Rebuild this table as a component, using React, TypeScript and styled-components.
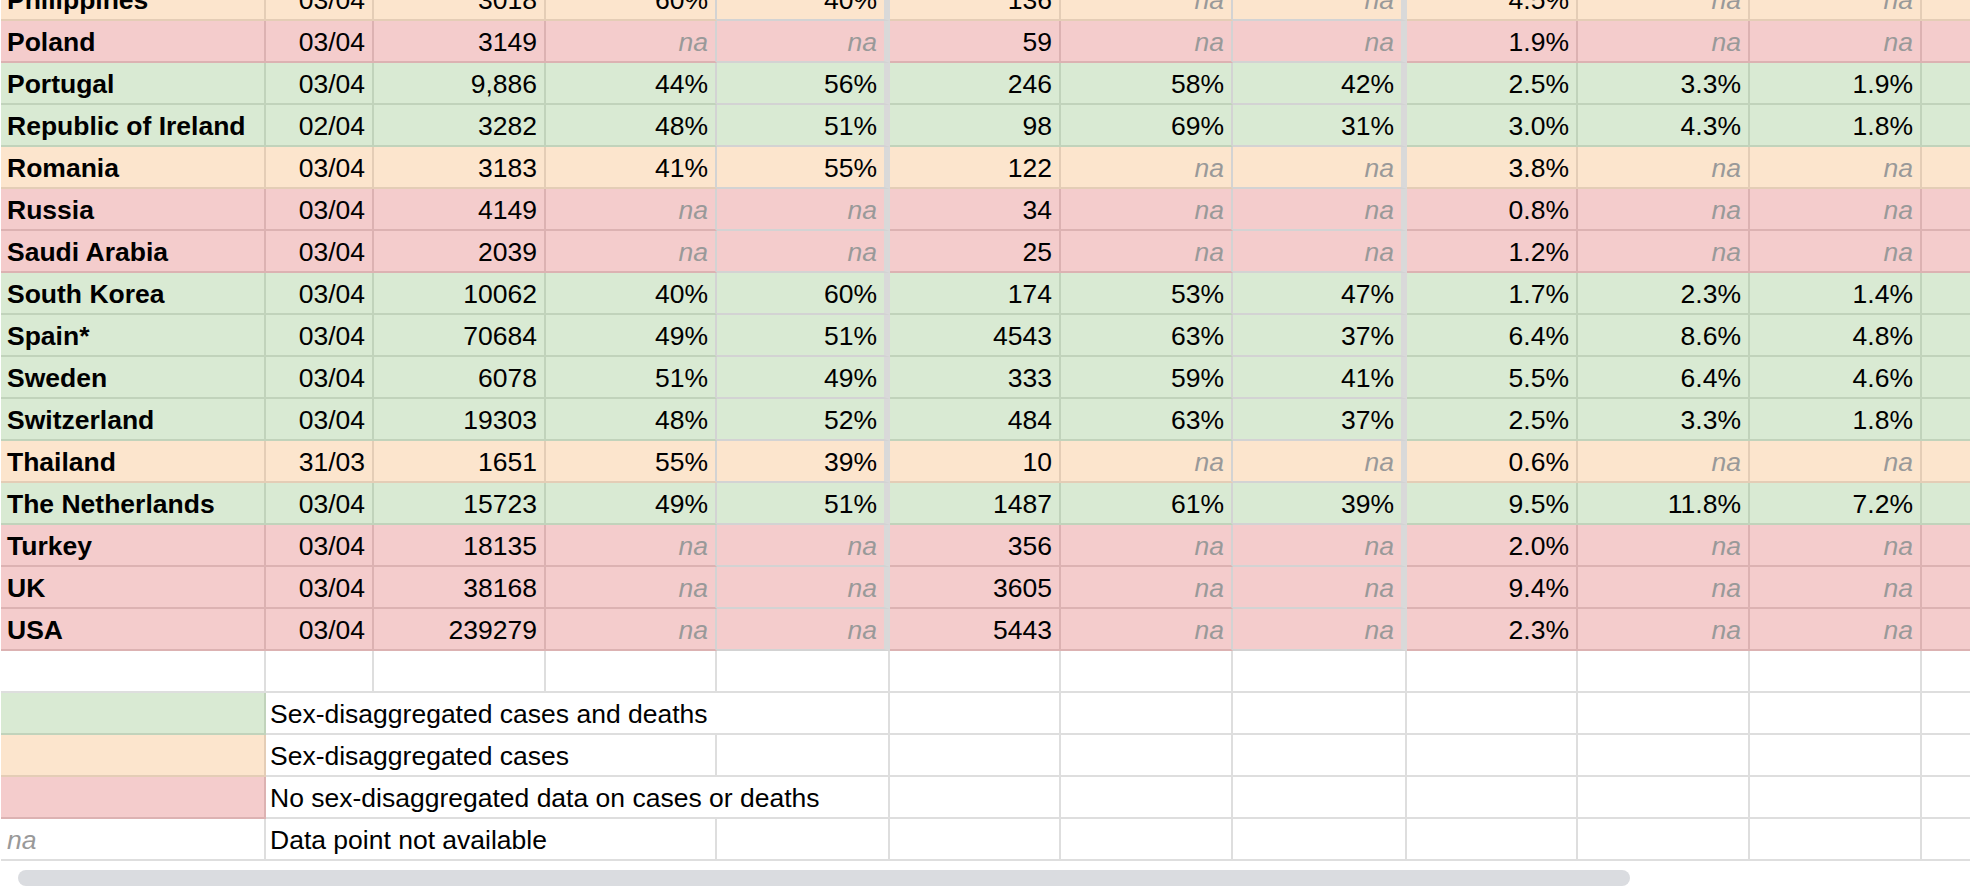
import React from "react";
import styled, { createGlobalStyle } from "styled-components";

const GlobalStyle = createGlobalStyle`
  html, body {
    margin: 0;
    padding: 0;
    background: #ffffff;
  }
  body {
    font-family: "Liberation Sans", Arial, sans-serif;
  }
`;

type Tone = "green" | "orange" | "pink" | "white";

const COLUMN_WIDTHS = [265, 108, 172, 171, 173, 171, 172, 174, 171, 172, 172, 48];
const COLS = COLUMN_WIDTHS.map((w) => `${w}px`).join(" ");

const FILL: Record<Tone, string> = {
  green: "#d9ead3",
  orange: "#fce5cd",
  pink: "#f4cccc",
  white: "#ffffff",
};

const LINE: Record<Tone, string> = {
  green: "#c1d3bb",
  orange: "#e4cdb6",
  pink: "#dcb2b2",
  white: "#dedede",
};

const BOX_LINE = "#d3d3d3";
const BAND = "#d9d9d9";

const Page = styled.div`
  width: 1976px;
  height: 890px;
  overflow: hidden;
  background: #ffffff;
`;

const Sheet = styled.div`
  display: flex;
  flex-direction: column;
  padding-left: 1px;
`;

const Row = styled.div<{ $h: number }>`
  display: grid;
  grid-template-columns: ${COLS};
  height: ${(p) => p.$h}px;
`;

const Cell = styled.div<{
  $tone: Tone;
  $right?: boolean;
  $rw: number;
  $rc: string;
  $bc: string;
  $span?: number;
}>`
  box-sizing: border-box;
  display: flex;
  align-items: flex-end;
  justify-content: ${(p) => (p.$right ? "flex-end" : "flex-start")};
  grid-column: span ${(p) => p.$span ?? 1};
  min-width: 0;
  overflow: hidden;
  white-space: nowrap;
  background: ${(p) => FILL[p.$tone]};
  border-right: ${(p) => p.$rw}px solid ${(p) => p.$rc};
  border-bottom: 2px solid ${(p) => p.$bc};
  padding: 0 ${(p) => (p.$right ? 7 : 5)}px 4px ${(p) => (p.$right ? 0 : 6)}px;
  font-size: 26.5px;
  line-height: 30px;
  color: #000000;
`;

const Country = styled.span`
  font-weight: 700;
`;

const Value = styled.span`
  font-weight: 400;
`;

const Missing = styled.span`
  font-style: italic;
  color: #999999;
`;

const LegendLabel = styled.span`
  font-weight: 400;
  margin-left: -2px;
`;

const ScrollTrack = styled.div`
  padding: 9px 0 0 18px;
`;

const ScrollThumb = styled.div`
  width: 1612px;
  height: 16px;
  border-radius: 8px;
  background: #dadce0;
`;

type DataRow = {
  tone: Tone;
  name: string;
  values: string[];
};

const rows: DataRow[] = [
  { tone: "orange", name: "Philippines", values: ["03/04", "3018", "60%", "40%", "136", "na", "na", "4.5%", "na", "na"] },
  { tone: "pink", name: "Poland", values: ["03/04", "3149", "na", "na", "59", "na", "na", "1.9%", "na", "na"] },
  { tone: "green", name: "Portugal", values: ["03/04", "9,886", "44%", "56%", "246", "58%", "42%", "2.5%", "3.3%", "1.9%"] },
  { tone: "green", name: "Republic of Ireland", values: ["02/04", "3282", "48%", "51%", "98", "69%", "31%", "3.0%", "4.3%", "1.8%"] },
  { tone: "orange", name: "Romania", values: ["03/04", "3183", "41%", "55%", "122", "na", "na", "3.8%", "na", "na"] },
  { tone: "pink", name: "Russia", values: ["03/04", "4149", "na", "na", "34", "na", "na", "0.8%", "na", "na"] },
  { tone: "pink", name: "Saudi Arabia", values: ["03/04", "2039", "na", "na", "25", "na", "na", "1.2%", "na", "na"] },
  { tone: "green", name: "South Korea", values: ["03/04", "10062", "40%", "60%", "174", "53%", "47%", "1.7%", "2.3%", "1.4%"] },
  { tone: "green", name: "Spain*", values: ["03/04", "70684", "49%", "51%", "4543", "63%", "37%", "6.4%", "8.6%", "4.8%"] },
  { tone: "green", name: "Sweden", values: ["03/04", "6078", "51%", "49%", "333", "59%", "41%", "5.5%", "6.4%", "4.6%"] },
  { tone: "green", name: "Switzerland", values: ["03/04", "19303", "48%", "52%", "484", "63%", "37%", "2.5%", "3.3%", "1.8%"] },
  { tone: "orange", name: "Thailand", values: ["31/03", "1651", "55%", "39%", "10", "na", "na", "0.6%", "na", "na"] },
  { tone: "green", name: "The Netherlands", values: ["03/04", "15723", "49%", "51%", "1487", "61%", "39%", "9.5%", "11.8%", "7.2%"] },
  { tone: "pink", name: "Turkey", values: ["03/04", "18135", "na", "na", "356", "na", "na", "2.0%", "na", "na"] },
  { tone: "pink", name: "UK", values: ["03/04", "38168", "na", "na", "3605", "na", "na", "9.4%", "na", "na"] },
  { tone: "pink", name: "USA", values: ["03/04", "239279", "na", "na", "5443", "na", "na", "2.3%", "na", "na"] },
];

const BOXED = new Set([4, 7]);
const BEFORE_BOXED = new Set([3, 6]);
const LAST = COLUMN_WIDTHS.length - 1;

function dataBorders(col: number, tone: Tone) {
  if (BOXED.has(col)) return { $rw: 6, $rc: BAND, $bc: BOX_LINE };
  if (BEFORE_BOXED.has(col)) return { $rw: 2, $rc: BOX_LINE, $bc: LINE[tone] };
  if (col === LAST) return { $rw: 0, $rc: "transparent", $bc: LINE[tone] };
  return { $rw: 2, $rc: LINE[tone], $bc: LINE[tone] };
}

function plainBorders(col: number) {
  return {
    $rw: col === LAST ? 0 : 2,
    $rc: col === LAST ? "transparent" : LINE.white,
    $bc: LINE.white,
  };
}

function CellText({ text }: { text: string }) {
  return text === "na" ? <Missing>na</Missing> : <Value>{text}</Value>;
}

function DataLine({ row, height }: { row: DataRow; height: number }) {
  return (
    <Row $h={height}>
      <Cell $tone={row.tone} {...dataBorders(0, row.tone)}>
        <Country>{row.name}</Country>
      </Cell>
      {row.values.map((v, i) => (
        <Cell key={i} $tone={row.tone} $right {...dataBorders(i + 1, row.tone)}>
          <CellText text={v} />
        </Cell>
      ))}
      <Cell $tone={row.tone} {...dataBorders(LAST, row.tone)} />
    </Row>
  );
}

function EmptyCells({ from }: { from: number }) {
  const cells = [];
  for (let c = from; c <= LAST; c++) {
    cells.push(<Cell key={c} $tone="white" {...plainBorders(c)} />);
  }
  return <>{cells}</>;
}

type LegendItem = { swatch: Tone | "na"; label: string; span: number };

const legend: LegendItem[] = [
  { swatch: "green", label: "Sex-disaggregated cases and deaths", span: 4 },
  { swatch: "orange", label: "Sex-disaggregated cases", span: 3 },
  { swatch: "pink", label: "No sex-disaggregated data on cases or deaths", span: 4 },
  { swatch: "na", label: "Data point not available", span: 3 },
];

function LegendLine({ item }: { item: LegendItem }) {
  const tone: Tone = item.swatch === "na" ? "white" : item.swatch;
  return (
    <Row $h={42}>
      <Cell $tone={tone} $rw={2} $rc={LINE[tone]} $bc={LINE[tone]}>
        {item.swatch === "na" ? <Missing>na</Missing> : null}
      </Cell>
      <Cell $tone="white" $span={item.span} {...plainBorders(1)}>
        <LegendLabel>{item.label}</LegendLabel>
      </Cell>
      <EmptyCells from={1 + item.span} />
    </Row>
  );
}

export default function App() {
  return (
    <Page>
      <GlobalStyle />
      <Sheet>
        {rows.map((row, i) => (
          <DataLine key={row.name} row={row} height={i === 0 ? 21 : 42} />
        ))}
        <Row $h={42}>
          <EmptyCells from={0} />
        </Row>
        {legend.map((item) => (
          <LegendLine key={item.label} item={item} />
        ))}
      </Sheet>
      <ScrollTrack>
        <ScrollThumb />
      </ScrollTrack>
    </Page>
  );
}
